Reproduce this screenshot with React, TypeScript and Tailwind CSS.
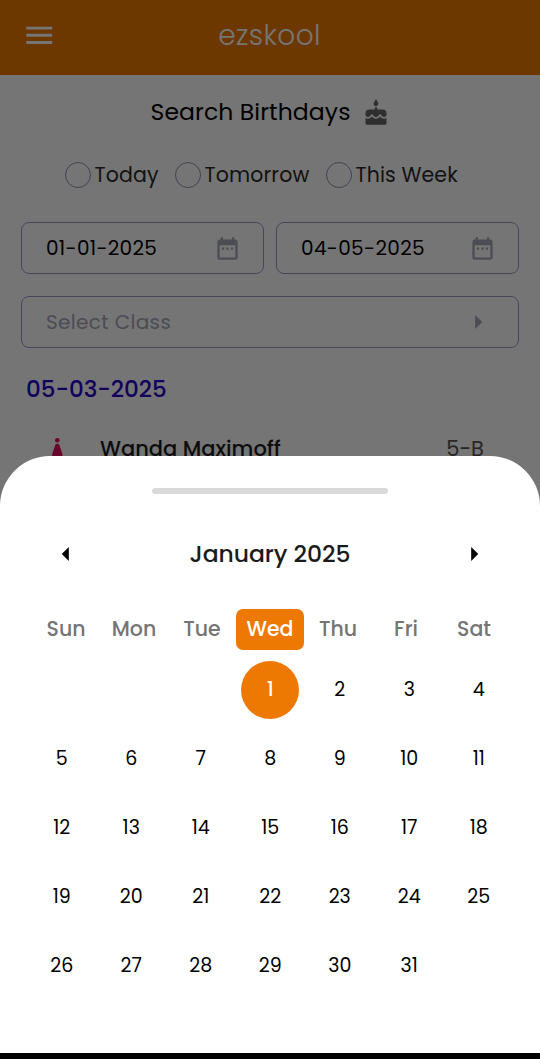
import { MdMenu, MdCake, MdDateRange, MdArrowRight, MdArrowLeft } from "react-icons/md";

const weekdays = ["Sun", "Mon", "Tue", "Wed", "Thu", "Fri", "Sat"];
const days = [null, null, null, ...Array.from({ length: 31 }, (_, i) => i + 1), null];

const filters = [
  { label: "Today", box: "w-[110px]", text: "tracking-[0.15px]" },
  { label: "Tomorrow", box: "w-[151px]", text: "tracking-[0.15px]" },
  { label: "This Week", box: "w-[140px]", text: "tracking-[0.1px]" },
];

function DateField({ value, spacing }: { value: string; spacing: string }) {
  return (
    <div className="flex h-[52px] w-[243px] items-center justify-between rounded-[8px] border border-[#9c9cbb] pr-[22px] pl-[24px]">
      <span className={`mt-[-1px] text-[20px] text-black ${spacing}`}>{value}</span>
      <MdDateRange className="size-[27px] text-[#a5a5b5]" />
    </div>
  );
}

function BirthdayPage() {
  return (
    <div className="h-full bg-white">
      <header className="grid h-[75px] grid-cols-[1fr_auto_1fr] items-center bg-[#ed7902] px-[22px] text-white">
        <MdMenu className="mt-[-4px] size-[34.5px]" />
        <h1 className="mt-[-3px] ml-[-1px] text-[28px] leading-[36px] font-light tracking-[0.4px]">ezskool</h1>
      </header>
      <div className="flex h-[75px] items-center justify-center gap-[11px] pb-[1px]">
        <h2 className="text-[23.5px] tracking-[0.1px] text-black">Search Birthdays</h2>
        <MdCake className="mt-[2px] size-[28px] text-[#666]" />
      </div>
      <div className="flex h-[50px] items-center pl-[65px]">
        {filters.map((f) => (
          <label key={f.label} className={`flex items-center gap-[3.5px] whitespace-nowrap ${f.box}`}>
            <span className="size-[26px] shrink-0 rounded-full border-[1.5px] border-[#9090aa]" />
            <span className={`text-[20.5px] text-[#2a2a2a] ${f.text}`}>{f.label}</span>
          </label>
        ))}
      </div>
      <div className="mt-[22px] flex gap-[12px] px-[21px]">
        <DateField value="01-01-2025" spacing="tracking-[0.3px]" />
        <DateField value="04-05-2025" spacing="tracking-[0.35px]" />
      </div>
      <div className="mx-[21px] mt-[22px] flex h-[52px] items-center justify-between rounded-[8px] border border-[#9c9cbb] pr-[23px] pl-[24px] text-[#a5a5b5]">
        <span className="mt-[-1px] text-[20px] tracking-[0.35px]">Select Class</span>
        <MdArrowRight className="size-[34px]" />
      </div>
      <h3 className="mt-[22px] pl-[26px] text-[23px] leading-[39px] font-medium text-[#2700cc]">05-03-2025</h3>
      <div className="mt-[20px] flex h-[40px] items-center pr-[56px] pl-[48px]">
        <svg viewBox="0 0 18 36" className="h-[36px] w-[18px] translate-y-[7px] fill-[#e3105f]">
          <circle cx="9.300" cy="2.300" r="2.300" />
          <path d="M9.300 5.700c-1.200 0-1.900.6-2.200 1.600L4 16.500c-.2.900.2 1.400 1 1.400h2.500V27h3.600v-9.100h2.500c.8 0 1.200-.5 1-1.400L11.500 7.300C11.200 6.300 10.500 5.700 9.300 5.700Z" />
        </svg>
        <span className="ml-[34px] grow text-[21px] font-medium text-[#1b1b1b]">Wanda Maximoff</span>
        <span className="text-[21px] text-[#555]">5-B</span>
      </div>
    </div>
  );
}

function CalendarSheet() {
  return (
    <section className="absolute inset-x-0 top-[456px] flex h-[600px] flex-col rounded-t-[50px] bg-white px-[26px] pt-[32px]">
      <div className="mx-auto h-[6px] w-[236px] rounded-[3px] bg-[#d9d9d9]" />
      <div className="mt-[40px] flex h-[40px] items-center justify-between px-[23px] text-black">
        <MdArrowLeft className="size-[34px]" />
        <h2 className="text-[23.5px] font-medium tracking-[-0.05px] text-[#1b1b1b]">January 2025</h2>
        <MdArrowRight className="size-[34px]" />
      </div>
      <div className="mx-[6px] mt-[35px] grid h-[41px] grid-cols-7">
        {weekdays.map((d) => (
          <div
            key={d}
            className={
              d === "Wed"
                ? "flex items-center justify-center rounded-[7px] bg-[#ed7902] text-[20.5px] font-medium text-white"
                : "flex items-center justify-center text-[20.5px] font-medium text-[#757575]"
            }
          >
            {d}
          </div>
        ))}
      </div>
      <div className="ml-[1px] mt-[5px] grid auto-rows-[69px] grid-cols-[repeat(7,69.5px)]">
        {days.map((d, i) => (
          <div key={i} className="flex items-center justify-center">
            <span
              className={
                d === 1
                  ? "flex size-[58px] items-center justify-center rounded-full bg-[#ed7902] pt-[2px] text-[19px] font-medium text-white"
                  : "pt-[2px] text-[19px] text-black"
              }
            >
              {d}
            </span>
          </div>
        ))}
      </div>
    </section>
  );
}

export default function App() {
  return (
    <main className="relative h-[1059px] w-[540px] overflow-hidden bg-black font-['Poppins','Inter',sans-serif]">
      <BirthdayPage />
      <div className="absolute inset-0 bg-black/54" />
      <CalendarSheet />
      <div className="absolute inset-x-0 bottom-0 h-[6px] bg-black" />
    </main>
  );
}
